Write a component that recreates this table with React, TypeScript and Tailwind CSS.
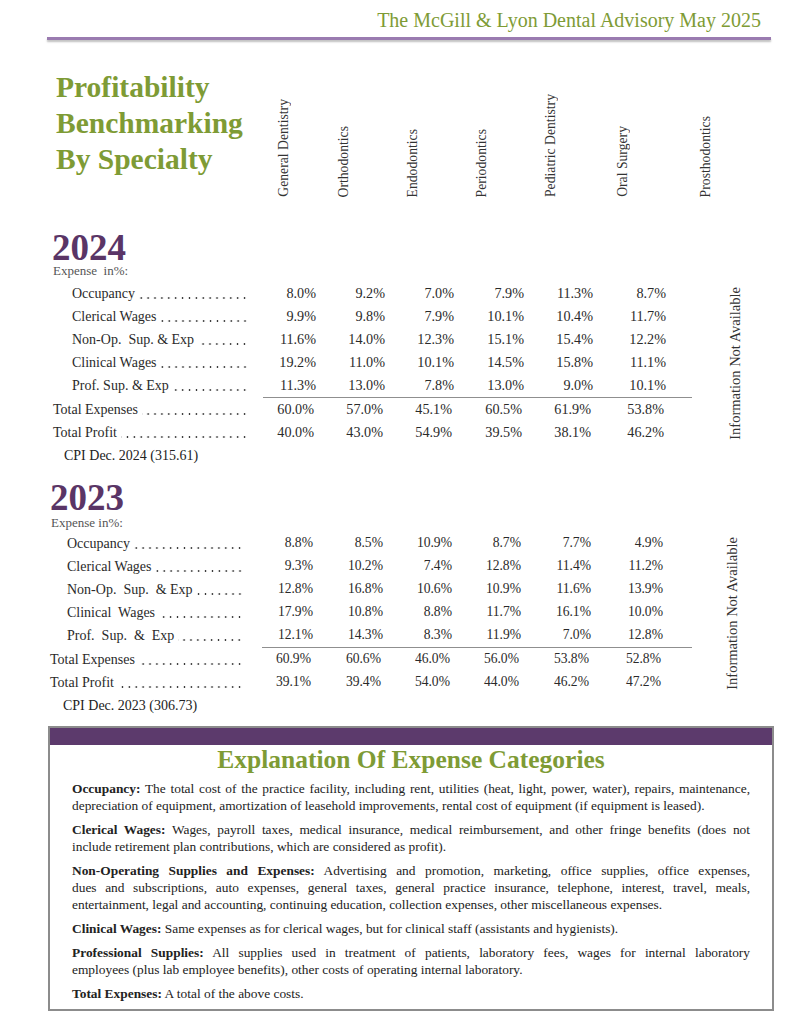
import React from "react";

type Row = { label: string; vals: string[]; total?: boolean };

const rows2024: Row[] = [
  { label: "Occupancy", vals: ["8.0%", "9.2%", "7.0%", "7.9%", "11.3%", "8.7%"] },
  { label: "Clerical Wages", vals: ["9.9%", "9.8%", "7.9%", "10.1%", "10.4%", "11.7%"] },
  { label: "Non-Op.  Sup. & Exp", vals: ["11.6%", "14.0%", "12.3%", "15.1%", "15.4%", "12.2%"] },
  { label: "Clinical Wages", vals: ["19.2%", "11.0%", "10.1%", "14.5%", "15.8%", "11.1%"] },
  { label: "Prof. Sup. & Exp", vals: ["11.3%", "13.0%", "7.8%", "13.0%", "9.0%", "10.1%"] },
  { label: "Total Expenses", vals: ["60.0%", "57.0%", "45.1%", "60.5%", "61.9%", "53.8%"], total: true },
  { label: "Total Profit", vals: ["40.0%", "43.0%", "54.9%", "39.5%", "38.1%", "46.2%"], total: true },
];

const rows2023: Row[] = [
  { label: "Occupancy", vals: ["8.8%", "8.5%", "10.9%", "8.7%", "7.7%", "4.9%"] },
  { label: "Clerical Wages", vals: ["9.3%", "10.2%", "7.4%", "12.8%", "11.4%", "11.2%"] },
  { label: "Non-Op.  Sup.  & Exp", vals: ["12.8%", "16.8%", "10.6%", "10.9%", "11.6%", "13.9%"] },
  { label: "Clinical  Wages", vals: ["17.9%", "10.8%", "8.8%", "11.7%", "16.1%", "10.0%"] },
  { label: "Prof.  Sup.  &  Exp", vals: ["12.1%", "14.3%", "8.3%", "11.9%", "7.0%", "12.8%"] },
  { label: "Total Expenses", vals: ["60.9%", "60.6%", "46.0%", "56.0%", "53.8%", "52.8%"], total: true },
  { label: "Total Profit", vals: ["39.1%", "39.4%", "54.0%", "44.0%", "46.2%", "47.2%"], total: true },
];

const specialties = [
  { name: "General Dentistry", ml: "ml-[0px]" },
  { name: "Orthodontics", ml: "ml-[44px]" },
  { name: "Endodontics", ml: "ml-[53px]" },
  { name: "Periodontics", ml: "ml-[53px]" },
  { name: "Pediatric Dentistry", ml: "ml-[53px]" },
  { name: "Oral Surgery", ml: "ml-[56px]" },
  { name: "Prosthodontics", ml: "ml-[67px]" },
];

// the explanation text, broken where the printed page breaks it
const explanations: { term: string; lines: string[] }[] = [
  {
    term: "Occupancy:",
    lines: [
      " The total cost of the practice facility, including rent, utilities (heat, light, power, water), repairs, maintenance,",
      "depreciation of equipment, amortization of leasehold improvements, rental cost of equipment (if equipment is leased).",
    ],
  },
  {
    term: "Clerical Wages:",
    lines: [
      " Wages, payroll taxes, medical insurance, medical reimbursement, and other fringe benefits (does not",
      "include retirement plan contributions, which are considered as profit).",
    ],
  },
  {
    term: "Non-Operating Supplies and Expenses:",
    lines: [
      " Advertising and promotion, marketing, office supplies, office expenses,",
      "dues and subscriptions, auto expenses, general taxes, general practice insurance, telephone, interest, travel, meals,",
      "entertainment, legal and accounting, continuing education, collection expenses, other miscellaneous expenses.",
    ],
  },
  {
    term: "Clinical Wages:",
    lines: [" Same expenses as for clerical wages, but for clinical staff (assistants and hygienists)."],
  },
  {
    term: "Professional Supplies:",
    lines: [
      " All supplies used in treatment of patients, laboratory fees, wages for internal laboratory",
      "employees (plus lab employee benefits), other costs of operating internal laboratory.",
    ],
  },
  {
    term: "Total Expenses:",
    lines: [" A total of the above costs."],
  },
];

type Layout = {
  left: string;
  labelW: string;
  indent: string;
  cols: string[];
  line: string;
  vals: string;
};

const layout2024: Layout = {
  left: "ml-[53px]",
  labelW: "w-[197px]",
  indent: "pl-[19px]",
  cols: ["w-[66px]", "w-[69px]", "w-[69px]", "w-[70px]", "w-[69px]", "w-[73px]"],
  line: "ml-[210px] w-[429px]",
  vals: "text-[14.2px]",
};

const layout2023: Layout = {
  left: "ml-[50px]",
  labelW: "w-[195px]",
  indent: "pl-[17px]",
  cols: ["w-[68px]", "w-[70px]", "w-[69px]", "w-[69px]", "w-[70px]", "w-[72px]"],
  line: "ml-[212px] w-[430px]",
  vals: "text-[13.6px]",
};

// dot leader drawn as a repeating dot pattern, right-aligned against the value columns
function Leader() {
  return (
    <span className="mb-[6px] ml-[4px] h-[2px] flex-1 self-end bg-[radial-gradient(circle,#333_0.85px,transparent_1.15px)] bg-[length:6.9px_2px] bg-[position:right_center] bg-repeat-x" />
  );
}

function TableRow({ row, l }: { row: Row; l: Layout }) {
  return (
    <div className="flex h-[23px] items-center">
      <div className={`flex h-full items-center ${l.labelW} ${row.total ? "" : l.indent} pr-[2px] text-[14px]`}>
        <span className="whitespace-pre">{row.label}</span>
        <Leader />
      </div>
      {row.vals.map((v, i) => (
        <div key={i} className={`${l.cols[i]} ${l.vals} text-right ${row.total ? "pr-[2px]" : ""}`}>
          {v}
        </div>
      ))}
    </div>
  );
}

function YearTable({ rows, l }: { rows: Row[]; l: Layout }) {
  return (
    <div className={`flex ${l.left} text-[#2a2a2a]`}>
      <div className="w-[639px]">
        {rows.slice(0, 5).map((r) => (
          <TableRow key={r.label} row={r} l={l} />
        ))}
        <div className={`${l.line} h-px bg-[#8f8f8f]`} />
        {rows.slice(5).map((r) => (
          <TableRow key={r.label} row={r} l={l} />
        ))}
      </div>
      <div className="flex w-[86px] items-center justify-center">
        <span className="rotate-180 text-[14.5px] leading-[16px] text-[#333] [writing-mode:vertical-rl]">
          Information Not Available
        </span>
      </div>
    </div>
  );
}

export default function App() {
  return (
    <div className="min-h-[1024px] w-[791px] bg-white font-['Liberation_Serif','Times_New_Roman',serif] text-[#222]">
      {/* masthead */}
      <div className="flex justify-end pr-[30px] pt-[8px] text-[20px] leading-[24px] text-[#7e9b35]">
        The McGill &amp; Lyon Dental Advisory May 2025
      </div>
      <div className="ml-[47px] mr-[20px] mt-[5px] h-[3px] bg-[#9a7bb0] shadow-[0_2px_2px_rgba(0,0,0,0.25)]" />

      {/* title + rotated specialty headers */}
      <div className="mt-[29px] flex h-[128px] items-end">
        <h1 className="ml-[56px] w-[220px] self-start text-[29.5px] font-bold leading-[36px] text-[#7e9b35]">
          Profitability
          <br />
          Benchmarking
          <br />
          By Specialty
        </h1>
        {specialties.map((s) => (
          <div
            key={s.name}
            className={`${s.ml} w-[16px] rotate-180 text-[13.7px] leading-[16px] text-[#333] [writing-mode:vertical-rl]`}
          >
            {s.name}
          </div>
        ))}
      </div>

      {/* 2024 */}
      <div className="ml-[52px] mt-[35px] text-[37px] font-bold leading-[32px] text-[#5a3566]">2024</div>
      <div className="ml-[53px] text-[13px] leading-[14px] text-[#555]">Expense&nbsp; in%:</div>
      <div className="mt-[4px]">
        <YearTable rows={rows2024} l={layout2024} />
      </div>
      <div className="ml-[64px] flex h-[22px] items-center text-[14px] text-[#222]">CPI Dec. 2024 (315.61)</div>

      {/* 2023 */}
      <div className="ml-[50px] mt-[16px] text-[37px] font-bold leading-[32px] text-[#5a3566]">2023</div>
      <div className="ml-[51px] mt-[2px] text-[13px] leading-[14px] text-[#555]">Expense in%:</div>
      <div className="mt-[2px]">
        <YearTable rows={rows2023} l={layout2023} />
      </div>
      <div className="ml-[63px] flex h-[22px] items-center text-[14px] text-[#222]">CPI Dec. 2023 (306.73)</div>

      {/* explanation box */}
      <div className="ml-[48px] mt-[10px] w-[726px] border-2 border-[#8c8c8c]">
        <div className="h-[17px] bg-[#5c3a6c]" />
        <h2 className="text-center text-[25.5px] font-bold leading-[30px] text-[#7e9b35]">
          Explanation Of Expense Categories
        </h2>
        <div className="mt-[5px] flex flex-col gap-[7px] px-[22px] pb-[7px] text-[13.4px] leading-[17px] text-[#222]">
          {explanations.map((e) => (
            <div key={e.term}>
              {e.lines.map((line, i) => (
                <div
                  key={i}
                  className={`whitespace-nowrap ${
                    i < e.lines.length - 1 ? "text-justify [text-align-last:justify]" : ""
                  }`}
                >
                  {i === 0 && <b>{e.term}</b>}
                  {line}
                </div>
              ))}
            </div>
          ))}
        </div>
      </div>
    </div>
  );
}
